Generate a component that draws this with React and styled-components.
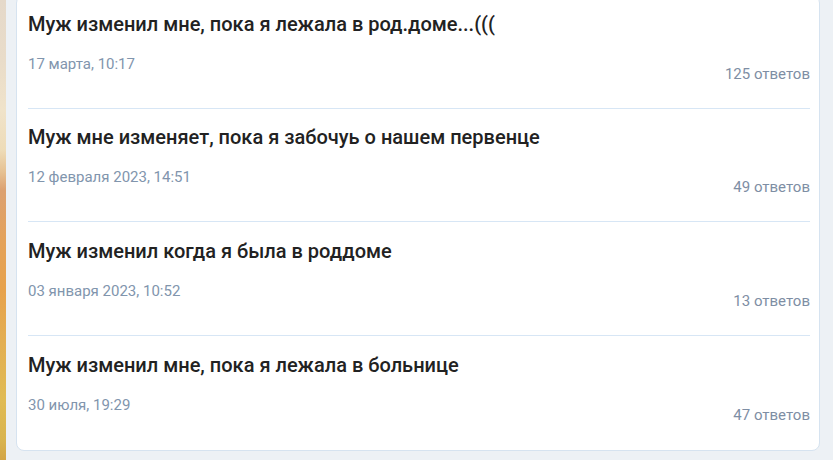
import React from 'react';
import styled, { createGlobalStyle } from 'styled-components';

const GlobalStyle = createGlobalStyle`
  html, body {
    margin: 0;
    padding: 0;
    background-color: #edf1f5;
    overflow: hidden;
  }
  body {
    font-family: Roboto, "Noto Sans", Arial, sans-serif;
  }
`;

const Page = styled.div`
  display: flex;
  height: 460px;
  overflow: hidden;
`;

const SideStrip = styled.div`
  width: 6px;
  flex-shrink: 0;
  background: linear-gradient(
    to bottom,
    #e5d9ca 0px,
    #e9dcc9 60px,
    #f0e3ca 110px,
    #eedcb8 150px,
    #e6c192 172px,
    #dca171 190px,
    #e4a25a 240px,
    #e7a24c 290px,
    #e3ae52 340px,
    #e0bb54 400px,
    #d9b44e 440px,
    #d3a546 460px
  );
`;

const Content = styled.div`
  flex: 1;
  padding: 0 13px 0 10px;
`;

const Card = styled.div`
  margin-top: -5px;
  background-color: #fff;
  border: 1px solid #d6e3f0;
  border-radius: 8px;
  padding: 0 9px 0 11px;
`;

const Topic = styled.div`
  padding: 16px 0 24px;
  border-bottom: 1px solid #d7e6f5;

  &:nth-child(n + 3) {
    padding-top: 17px;
  }

  &:last-child {
    border-bottom: none;
    padding-bottom: 25px;
  }
`;

const Title = styled.div`
  font-size: 20px;
  line-height: 24px;
  font-weight: 500;
  color: #222222;
`;

const Footer = styled.div`
  display: flex;
  justify-content: space-between;
  align-items: flex-start;
  margin-top: 18px;
`;

const DateText = styled.div`
  font-size: 15px;
  line-height: 20px;
  color: #8195ad;
`;

const Count = styled.div`
  margin-top: 10px;
  font-size: 15px;
  line-height: 20px;
  color: #7e8ea4;
`;

const topics = [
  { title: 'Муж изменил мне, пока я лежала в род.доме...(((', date: '17 марта, 10:17', answers: '125 ответов' },
  { title: 'Муж мне изменяет, пока я забочуь о нашем первенце', date: '12 февраля 2023, 14:51', answers: '49 ответов' },
  { title: 'Муж изменил когда я была в роддоме', date: '03 января 2023, 10:52', answers: '13 ответов' },
  { title: 'Муж изменил мне, пока я лежала в больнице', date: '30 июля, 19:29', answers: '47 ответов' },
];

export default function App() {
  return (
    <>
      <GlobalStyle />
      <Page>
        <SideStrip />
        <Content>
          <Card>
            {topics.map((t) => (
              <Topic key={t.title}>
                <Title>{t.title}</Title>
                <Footer>
                  <DateText>{t.date}</DateText>
                  <Count>{t.answers}</Count>
                </Footer>
              </Topic>
            ))}
          </Card>
        </Content>
      </Page>
    </>
  );
}
